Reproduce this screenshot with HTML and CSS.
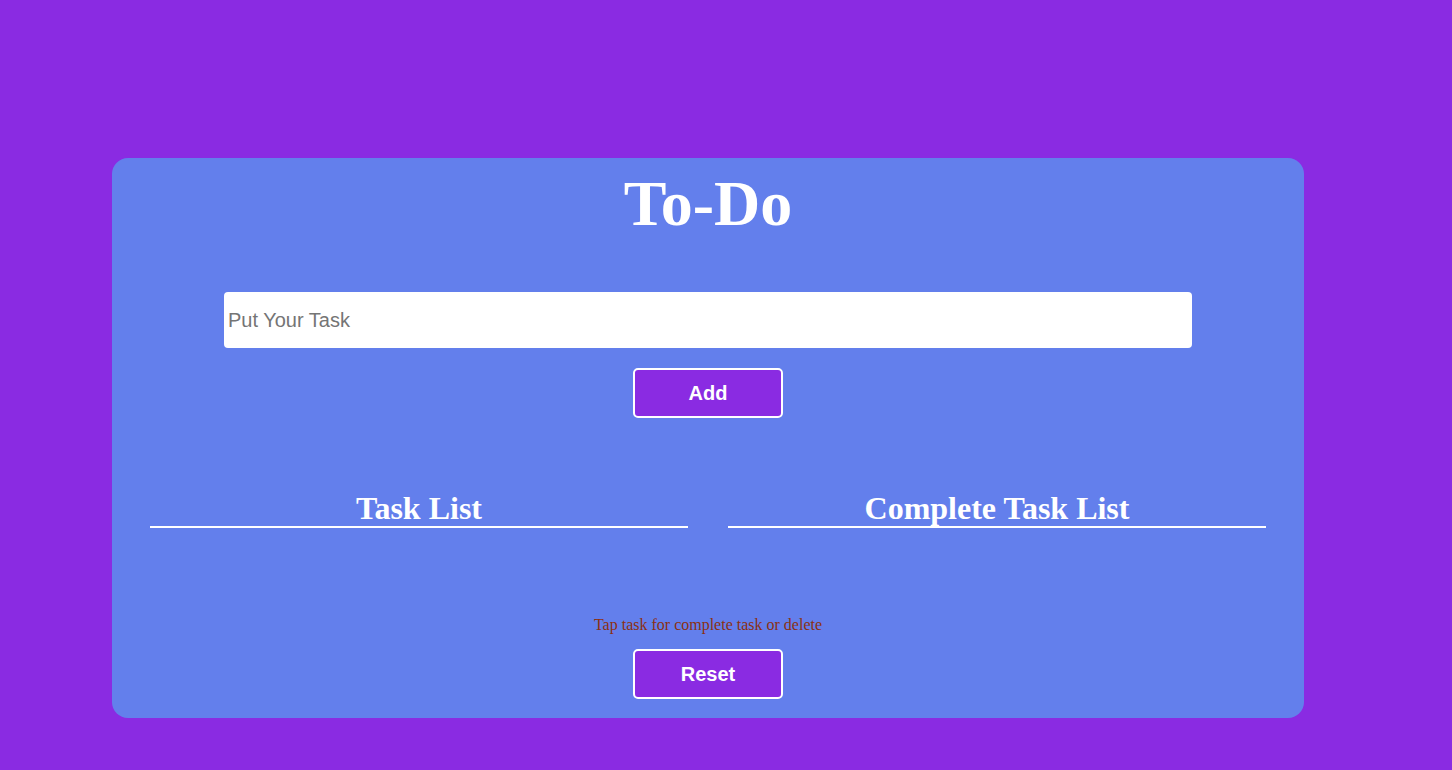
FILE: index.html
```html
<!DOCTYPE html>
<html>
<head>
<meta charset="utf-8">
<title>To-Do</title>
<link rel="stylesheet" href="styles.css">
</head>
<body>
<div class="card">
  <h1 class="title">To-Do</h1>
  <input class="task-input" type="text" placeholder="Put Your Task">
  <button class="btn btn-add">Add</button>
  <div class="lists">
    <div class="list">
      <h2 class="list-title">Task List</h2>
      <ul class="items"></ul>
    </div>
    <div class="list">
      <h2 class="list-title">Complete Task List</h2>
      <ul class="items"></ul>
    </div>
  </div>
  <p class="hint">Tap task for complete task or delete</p>
  <button class="btn btn-reset">Reset</button>
</div>
</body>
</html>
```

FILE: styles.css
```css
html, body {
  margin: 0;
  padding: 0;
}
body {
  background: #8a2be2;
  font-family: "Liberation Serif", "Times New Roman", serif;
  height: 770px;
  overflow: hidden;
}
.card {
  box-sizing: border-box;
  margin: 158px 0 0 112px;
  width: 1192px;
  height: 560px;
  background: #637fec;
  border-radius: 16px;
  display: flex;
  flex-direction: column;
  align-items: center;
  padding: 0 38px;
}
.title {
  margin: 0;
  padding-top: 9px;
  font-size: 64px;
  line-height: 74px;
  font-weight: bold;
  color: #ffffff;
}
.task-input {
  box-sizing: border-box;
  margin-top: 51px;
  width: 968px;
  height: 56px;
  border: none;
  border-radius: 4px;
  padding: 0 4px;
  font-family: "Liberation Sans", Arial, sans-serif;
  font-size: 20px;
  color: #333;
  background: #fff;
  outline: none;
}
.task-input::placeholder {
  color: #757575;
}
.btn {
  box-sizing: border-box;
  width: 150px;
  height: 50px;
  background: #8a2be2;
  border: 2px solid #ffffff;
  border-radius: 5px;
  color: #ffffff;
  font-family: "Liberation Sans", Arial, sans-serif;
  font-size: 20px;
  font-weight: bold;
  cursor: pointer;
}
.btn-add {
  margin-top: 20px;
}
.lists {
  align-self: stretch;
  display: flex;
  gap: 40px;
  margin-top: 72px;
}
.list {
  flex: 1;
}
.list-title {
  margin: 0;
  font-size: 32px;
  line-height: 36px;
  font-weight: bold;
  color: #ffffff;
  text-align: center;
  border-bottom: 2px solid #ffffff;
}
.items {
  margin: 0;
  padding: 0;
  list-style: none;
  min-height: 80px;
}
.hint {
  margin: 8px 0 0;
  font-size: 16px;
  line-height: 18px;
  color: #8b3010;
}
.btn-reset {
  margin-top: 15px;
}
```
